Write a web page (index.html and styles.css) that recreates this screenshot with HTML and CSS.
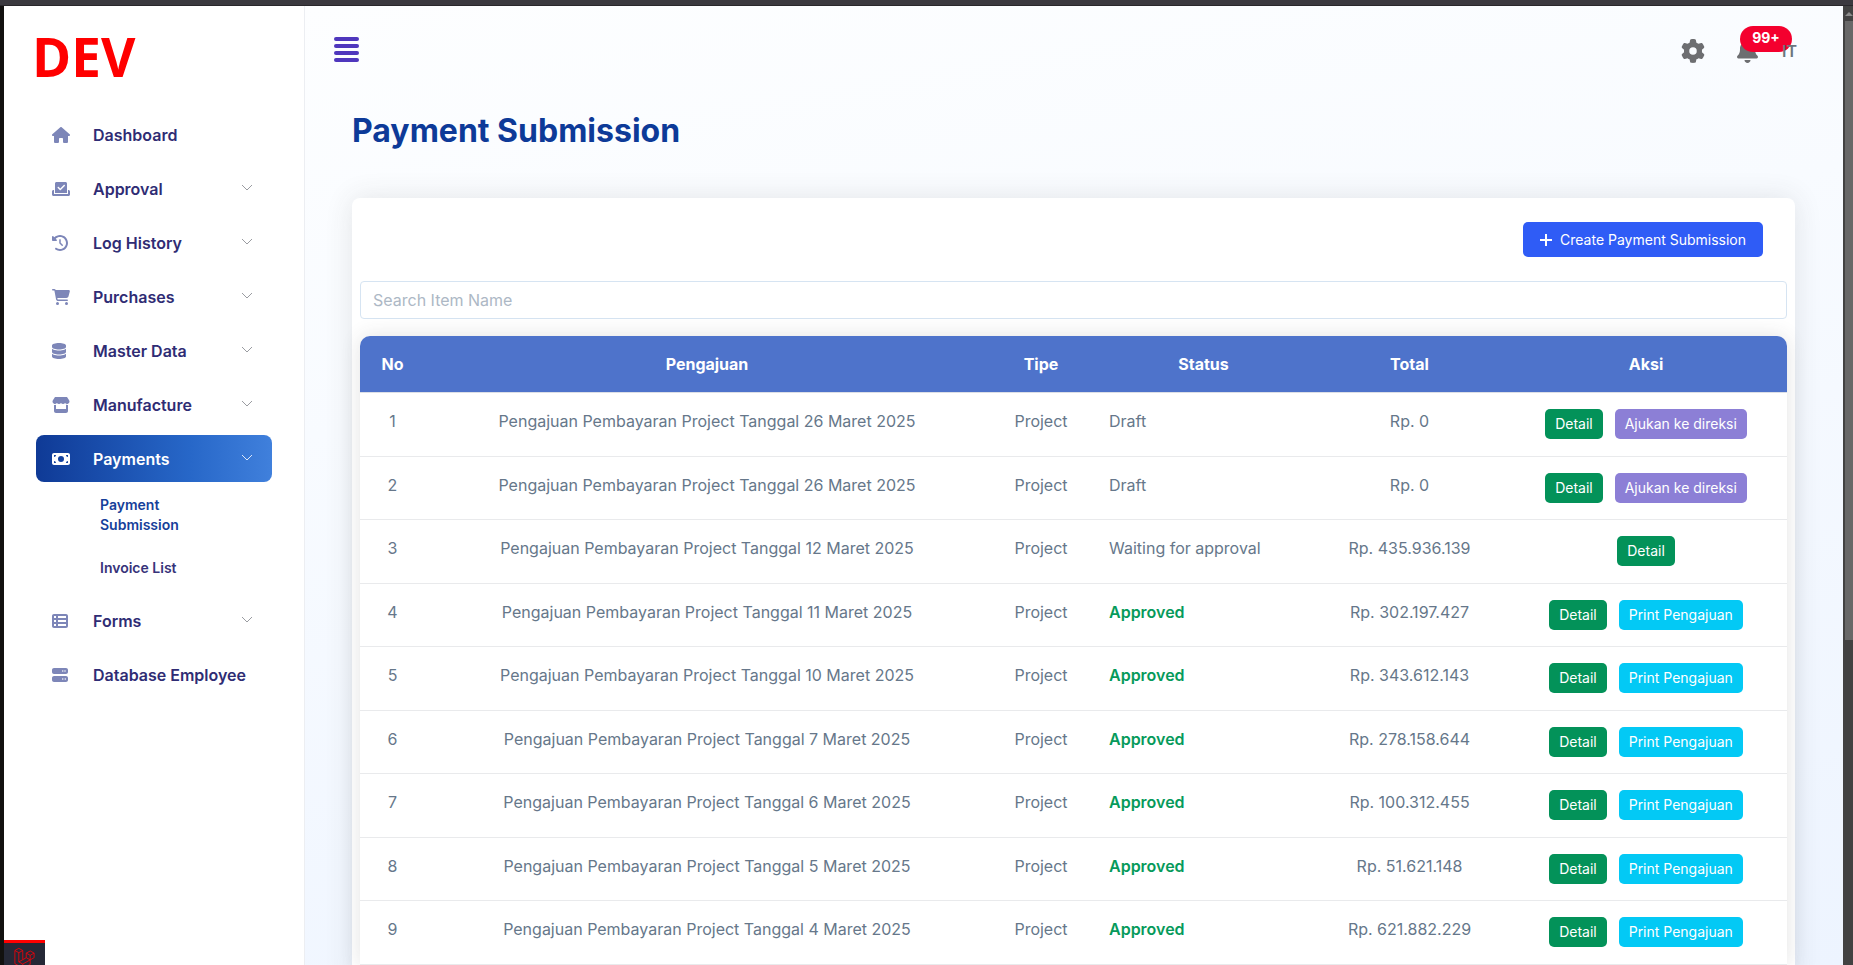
FILE: index.html
```html
<!DOCTYPE html>
<html lang="id">
<head>
<meta charset="utf-8">
<title>Payment Submission</title>
<link rel="stylesheet" href="styles.css">
</head>
<body>
<div class="frame-top"></div>
<div class="frame">
  <aside class="sidebar">
    <a class="brand" href="#">DEV</a>
    <nav class="nav">
      <a class="nav-item" href="#"><svg class="ico" viewBox="0 0 576 512"><path d="M575.8 255.5c0 18-15 32.1-32 32.1h-32l.7 160.2c0 2.7-.2 5.4-.5 8.100V472c0 22.100-17.900 40-40 40H456c-1.100 0-2.200 0-3.300-.1c-1.400 .1-2.800 .1-4.200 .1H416 392c-22.100 0-40-17.900-40-40V448 384c0-17.700-14.300-32-32-32H256c-17.700 0-32 14.300-32 32v64 24c0 22.100-17.900 40-40 40H160 128.100c-1.500 0-3-.1-4.500-.2c-1.200 .1-2.400 .2-3.600 .2H104c-22.100 0-40-17.900-40-40V360c0-.9 0-1.900 .1-2.800V287.600H32c-18 0-32-14-32-32.100c0-9 3-17 10-24L266.400 8c7-7 15-8 22-8s15 2 21 7L564.800 231.500c8 7 12 15 11 24z"/></svg><span>Dashboard</span></a>
      <a class="nav-item" href="#"><svg class="ico" viewBox="0 0 576 512"><path d="M96 80c0-26.500 21.500-48 48-48H432c26.500 0 48 21.500 48 48V384H96V80zm313 47c-9.400-9.400-24.600-9.400-33.900 0l-111 111-47-47c-9.400-9.400-24.600-9.400-33.900 0s-9.400 24.600 0 33.900l64 64c9.400 9.400 24.600 9.400 33.900 0L409 161c9.400-9.400 9.400-24.600 0-33.900zM0 336c0-26.500 21.500-48 48-48H64V416H512V288h16c26.500 0 48 21.500 48 48v96c0 26.500-21.500 48-48 48H48c-26.500 0-48-21.500-48-48V336z"/></svg><span>Approval</span><svg class="chev" viewBox="0 0 12 8"><path d="M1 1l5 5 5-5"/></svg></a>
      <a class="nav-item" href="#"><svg class="ico" viewBox="0 0 512 512"><path d="M75 75L41 41C25.900 25.900 0 36.600 0 57.900V168c0 13.300 10.700 24 24 24H134.100c21.400 0 32.100-25.900 17-41l-30.800-30.800C155 85.500 203 64 256 64c106 0 192 86 192 192s-86 192-192 192c-40.800 0-78.600-12.700-109.700-34.400c-14.500-10.100-34.400-6.600-44.600 7.900s-6.600 34.400 7.900 44.600C151.200 495 201.700 512 256 512c141.400 0 256-114.600 256-256S397.400 0 256 0C185.300 0 121.300 28.700 75 75zm181 53c-13.300 0-24 10.700-24 24V256c0 6.400 2.500 12.500 7 17l72 72c9.400 9.400 24.600 9.400 33.900 0s9.400-24.600 0-33.900l-65-65V152c0-13.300-10.700-24-24-24z"/></svg><span>Log History</span><svg class="chev" viewBox="0 0 12 8"><path d="M1 1l5 5 5-5"/></svg></a>
      <a class="nav-item" href="#"><svg class="ico" viewBox="0 0 576 512"><path d="M0 24C0 10.700 10.700 0 24 0H69.500c22 0 41.500 12.800 50.600 32h411c26.300 0 45.500 25 38.600 50.400l-41 152.300c-8.500 31.400-37 53.300-69.500 53.300H170.700l5.400 28.500c2.200 11.300 12.100 19.500 23.600 19.500H488c13.300 0 24 10.700 24 24s-10.700 24-24 24H199.700c-34.600 0-64.300-24.600-70.700-58.500L77.400 54.500c-.7-3.800-4-6.500-7.900-6.500H24C10.700 48 0 37.300 0 24zM128 464a48 48 0 1 1 96 0 48 48 0 1 1 -96 0zm336-48a48 48 0 1 1 0 96 48 48 0 1 1 0-96z"/></svg><span>Purchases</span><svg class="chev" viewBox="0 0 12 8"><path d="M1 1l5 5 5-5"/></svg></a>
      <a class="nav-item" href="#"><svg class="ico" viewBox="0 0 448 512"><path d="M448 80v48c0 44.200-100.300 80-224 80S0 172.200 0 128V80C0 35.800 100.300 0 224 0S448 35.800 448 80zM393.200 214.700c20.800-7.400 39.900-16.900 54.800-28.600V288c0 44.200-100.300 80-224 80S0 332.200 0 288V186.100c14.900 11.800 34 21.200 54.800 28.600C99.700 230.700 159.500 240 224 240s124.300-9.300 169.200-25.300zM0 346.100c14.900 11.800 34 21.200 54.800 28.600C99.700 390.700 159.500 400 224 400s124.300-9.300 169.200-25.300c20.800-7.400 39.900-16.900 54.800-28.600V432c0 44.200-100.300 80-224 80S0 476.200 0 432V346.100z"/></svg><span>Master Data</span><svg class="chev" viewBox="0 0 12 8"><path d="M1 1l5 5 5-5"/></svg></a>
      <a class="nav-item" href="#"><svg class="ico" viewBox="0 0 576 512"><path d="M547.600 103.800L490.300 13.100C485.200 5 476.100 0 466.400 0H109.600C99.900 0 90.800 5 85.700 13.100L28.300 103.800c-29.600 46.800-3.400 111.900 51.900 119.400c4 .5 8.100 .8 12.100 .8c26.100 0 49.300-11.400 65.200-29c15.900 17.600 39.100 29 65.200 29s49.300-11.400 65.200-29c15.900 17.600 39.100 29 65.200 29c26.200 0 49.300-11.400 65.200-29c16 17.600 39.100 29 65.200 29c4.100 0 8.100-.3 12.100-.8c55.500-7.400 81.800-72.500 52.100-119.400zM499.700 254.900c-5.300 .7-10.700 1.100-16.200 1.100c-12.400 0-24.300-1.900-35.400-5.300V384H128V250.600c-11.200 3.500-23.200 5.400-35.600 5.400c-5.500 0-11-.4-16.300-1.100c-4.100-.6-8.100-1.300-12.100-2.300V448c0 35.300 28.700 64 64 64H448c35.300 0 64-28.700 64-64V252.600c-4 1-8 1.800-12.300 2.300z"/></svg><span>Manufacture</span><svg class="chev" viewBox="0 0 12 8"><path d="M1 1l5 5 5-5"/></svg></a>
      <a class="nav-item active" href="#"><svg class="ico" viewBox="0 0 576 512"><path fill-rule="evenodd" d="M64 64C28.700 64 0 92.700 0 128V384c0 35.300 28.700 64 64 64H512c35.300 0 64-28.700 64-64V128c0-35.300-28.700-64-64-64H64zM128 384H64V320c35.300 0 64 28.700 64 64zM64 192V128h64c0 35.300-28.700 64-64 64zM448 384c0-35.300 28.700-64 64-64v64H448zM512 192c-35.300 0-64-28.700-64-64h64v64zM288 160a96 96 0 1 1 0 192 96 96 0 1 1 0-192z"/></svg><span>Payments</span><svg class="chev" viewBox="0 0 12 8"><path d="M1 1l5 5 5-5"/></svg></a>
      <div class="subnav">
        <a class="sub current" href="#">Payment Submission</a>
        <a class="sub" href="#">Invoice List</a>
      </div>
      <a class="nav-item" href="#"><svg class="ico" viewBox="0 0 512 512"><path fill-rule="evenodd" d="M0 96C0 60.700 28.700 32 64 32H448c35.300 0 64 28.700 64 64V416c0 35.300-28.700 64-64 64H64c-35.300 0-64-28.700-64-64V96zM64 96v64h64V96H64zm384 0H192v64H448V96zM64 224v64h64V224H64zm384 0H192v64H448V224zM64 352v64h64V352H64zm384 0H192v64H448V352z"/></svg><span>Forms</span><svg class="chev" viewBox="0 0 12 8"><path d="M1 1l5 5 5-5"/></svg></a>
      <a class="nav-item" href="#"><svg class="ico" viewBox="0 0 512 512"><path fill-rule="evenodd" d="M64 32C28.700 32 0 60.700 0 96v64c0 35.300 28.700 64 64 64H448c35.300 0 64-28.700 64-64V96c0-35.300-28.700-64-64-64H64zm280 72a24 24 0 1 1 0 48 24 24 0 1 1 0-48zm48 24a24 24 0 1 1 48 0 24 24 0 1 1 -48 0zM64 288c-35.300 0-64 28.700-64 64v64c0 35.300 28.700 64 64 64H448c35.300 0 64-28.700 64-64V352c0-35.300-28.700-64-64-64H64zm280 72a24 24 0 1 1 0 48 24 24 0 1 1 0-48zm56 24a24 24 0 1 1 48 0 24 24 0 1 1 -48 0z"/></svg><span>Database Employee</span></a>
    </nav>
    <button class="debug" type="button" aria-label="Debug bar"><svg viewBox="0 0 24 24"><path d="M1 4l4.500-2.500L10 4v10.500l4-2.300V7l4.500-2.500L23 7v5.200l-4.500 2.500V20L10 24l-9-5zM1 4l4.500 2.500L10 4M5.500 6.500V17l4.500 2.500 8.500-4.800M14 7l4.500 2.500L23 7M18.500 9.500v5.200M5.500 17l4.500-2.500M14 12.200l4.500 2.500M10 19.500V24"/></svg></button>
  </aside>
  <main class="main">
    <header class="topbar">
      <button class="menu" type="button" aria-label="Menu"><span></span><span></span><span></span><span></span></button>
      <div class="tools">
        <button class="tool" type="button" aria-label="Settings"><svg class="gear" viewBox="0 0 512 512"><path d="M495.900 166.600c3.200 8.700 .5 18.400-6.400 24.600l-43.300 39.400c1.100 8.300 1.700 16.800 1.700 25.400s-.6 17.100-1.700 25.400l43.300 39.400c6.900 6.200 9.600 15.900 6.400 24.600c-4.400 11.900-9.700 23.300-15.800 34.300l-4.700 8.100c-6.600 11-14 21.400-22.100 31.200c-5.900 7.200-15.700 9.600-24.500 6.800l-55.700-17.700c-13.400 10.300-28.200 18.900-44 25.400l-12.500 57.100c-2 9.100-9 16.300-18.200 17.800c-13.800 2.300-28 3.500-42.500 3.500s-28.700-1.200-42.500-3.500c-9.200-1.500-16.200-8.700-18.200-17.800l-12.500-57.100c-15.800-6.500-30.600-15.100-44-25.400L83.100 425.900c-8.800 2.800-18.600 .3-24.500-6.800c-8.100-9.800-15.500-20.200-22.100-31.200l-4.700-8.100c-6.100-11-11.400-22.400-15.800-34.300c-3.200-8.700-.5-18.400 6.400-24.600l43.300-39.400C64.600 273.100 64 264.600 64 256s.6-17.100 1.700-25.400L22.400 191.200c-6.900-6.200-9.600-15.900-6.400-24.600c4.400-11.900 9.700-23.300 15.800-34.300l4.700-8.100c6.600-11 14-21.400 22.100-31.200c5.900-7.200 15.700-9.600 24.500-6.800l55.700 17.700c13.400-10.300 28.200-18.900 44-25.400l12.500-57.100c2-9.100 9-16.300 18.200-17.800C227.300 1.200 241.500 0 256 0s28.700 1.200 42.500 3.500c9.200 1.500 16.200 8.700 18.200 17.800l12.500 57.100c15.800 6.500 30.600 15.100 44 25.400l55.700-17.700c8.800-2.800 18.600-.3 24.500 6.800c8.100 9.800 15.500 20.200 22.100 31.200l4.700 8.100c6.100 11 11.400 22.400 15.800 34.300zM256 336a80 80 0 1 0 0-160 80 80 0 1 0 0 160z"/></svg></button>
        <button class="tool bell" type="button" aria-label="Notifications"><svg viewBox="0 0 448 512"><path d="M224 0c-17.700 0-32 14.300-32 32V51.200C119 66 64 130.600 64 208v18.800c0 47-17.300 92.400-48.500 127.600l-7.400 8.300c-8.400 9.400-10.400 22.900-5.300 34.400S19.400 416 32 416H416c12.600 0 24-7.400 29.200-18.900s3.100-25-5.300-34.400l-7.400-8.300C401.300 319.200 384 273.900 384 226.800V208c0-77.400-55-142-128-156.800V32c0-17.700-14.300-32-32-32zm45.300 493.300c12-12 18.700-28.300 18.700-45.300H224 160c0 17 6.700 33.300 18.700 45.300s28.300 18.700 45.300 18.700s33.300-6.700 45.300-18.700z"/></svg><span class="badge">99+</span></button>
        <a class="user" href="#">IT</a>
      </div>
    </header>
    <div class="content">
      <h1 class="title">Payment Submission</h1>
      <section class="card">
        <div class="actions"><button class="create" type="button"><svg viewBox="0 0 12 12"><path d="M6 0v12M0 6h12"/></svg>Create Payment Submission</button></div>
        <input class="search" type="text" placeholder="Search Item Name" aria-label="Search Item Name">
        <table class="table">
          <colgroup><col class="c-no"><col><col class="c-type"><col class="c-status"><col class="c-total"><col class="c-action"></colgroup>
          <thead><tr><th>No</th><th>Pengajuan</th><th>Tipe</th><th>Status</th><th>Total</th><th>Aksi</th></tr></thead>
          <tbody>
            <tr><td>1</td><td>Pengajuan Pembayaran Project Tanggal 26 Maret 2025</td><td>Project</td><td class="status">Draft</td><td>Rp. 0</td><td><div class="btns"><button class="btn detail" type="button">Detail</button><button class="btn submit" type="button">Ajukan ke direksi</button></div></td></tr>
            <tr><td>2</td><td>Pengajuan Pembayaran Project Tanggal 26 Maret 2025</td><td>Project</td><td class="status">Draft</td><td>Rp. 0</td><td><div class="btns"><button class="btn detail" type="button">Detail</button><button class="btn submit" type="button">Ajukan ke direksi</button></div></td></tr>
            <tr><td>3</td><td>Pengajuan Pembayaran Project Tanggal 12 Maret 2025</td><td>Project</td><td class="status">Waiting for approval</td><td>Rp. 435.936.139</td><td><div class="btns"><button class="btn detail" type="button">Detail</button></div></td></tr>
            <tr><td>4</td><td>Pengajuan Pembayaran Project Tanggal 11 Maret 2025</td><td>Project</td><td class="status approved">Approved</td><td>Rp. 302.197.427</td><td><div class="btns"><button class="btn detail" type="button">Detail</button><button class="btn print" type="button">Print Pengajuan</button></div></td></tr>
            <tr><td>5</td><td>Pengajuan Pembayaran Project Tanggal 10 Maret 2025</td><td>Project</td><td class="status approved">Approved</td><td>Rp. 343.612.143</td><td><div class="btns"><button class="btn detail" type="button">Detail</button><button class="btn print" type="button">Print Pengajuan</button></div></td></tr>
            <tr><td>6</td><td>Pengajuan Pembayaran Project Tanggal 7 Maret 2025</td><td>Project</td><td class="status approved">Approved</td><td>Rp. 278.158.644</td><td><div class="btns"><button class="btn detail" type="button">Detail</button><button class="btn print" type="button">Print Pengajuan</button></div></td></tr>
            <tr><td>7</td><td>Pengajuan Pembayaran Project Tanggal 6 Maret 2025</td><td>Project</td><td class="status approved">Approved</td><td>Rp. 100.312.455</td><td><div class="btns"><button class="btn detail" type="button">Detail</button><button class="btn print" type="button">Print Pengajuan</button></div></td></tr>
            <tr><td>8</td><td>Pengajuan Pembayaran Project Tanggal 5 Maret 2025</td><td>Project</td><td class="status approved">Approved</td><td>Rp. 51.621.148</td><td><div class="btns"><button class="btn detail" type="button">Detail</button><button class="btn print" type="button">Print Pengajuan</button></div></td></tr>
            <tr><td>9</td><td>Pengajuan Pembayaran Project Tanggal 4 Maret 2025</td><td>Project</td><td class="status approved">Approved</td><td>Rp. 621.882.229</td><td><div class="btns"><button class="btn detail" type="button">Detail</button><button class="btn print" type="button">Print Pengajuan</button></div></td></tr>
          </tbody>
        </table>
      </section>
    </div>
  </main>
  <div class="scrollbar"><div class="scroll-arrow"></div><div class="thumb"></div></div>
</div>
</body>
</html>
```
FILE: styles.css
```css
* { box-sizing: border-box; }
body {
  margin: 0;
  height: 100vh;
  overflow: hidden;
  display: flex;
  flex-direction: column;
  font-family: Inter, "Liberation Sans", sans-serif;
  font-size: 16px;
  line-height: 24px;
  color: #66778a;
}
a { color: inherit; text-decoration: none; }
button { font-family: inherit; border: 0; padding: 0; cursor: pointer; }
.frame-top { flex: none; height: 6px; background: #3b393f; border-bottom: 1px solid #29272b; }
.frame { flex: 1; min-height: 0; display: flex; border-left: 4px solid #12110f; }

.sidebar {
  position: relative;
  flex: none;
  width: 301px;
  background: #fff;
  border-right: 1px solid #eceef2;
  padding: 23px 28px 0;
}
.brand {
  display: block;
  height: 64px;
  line-height: 56px;
  font-family: "Open Sans", sans-serif;
  font-weight: 700;
  font-size: 53px;
  color: #f00;
}
.nav { display: flex; flex-direction: column; gap: 7px; padding: 18px 4px 0; }
.nav-item {
  display: grid;
  grid-template-columns: 25px 1fr auto;
  align-items: center;
  column-gap: 16px;
  height: 47px;
  padding: 0 19px 0 16px;
  border-radius: 8px;
  font-weight: 600;
  white-space: nowrap;
  color: #2f2c74;
}
.ico { height: 16px; fill: #7d86b8; }
.chev { width: 12px; height: 8px; margin-bottom: 2px; fill: none; stroke: #9a9ca1; stroke-width: 1; }
.active { color: #fff; background: linear-gradient(90deg, #0f3a96, #2767c8 65%, #4080dc); }
.active .ico { fill: #fff; }
.active .chev { stroke: #dbe6f8; }
.subnav { display: flex; flex-direction: column; gap: 23px; width: 160px; padding: 6px 0 12px 64px; }
.sub { font-size: 14px; line-height: 20px; font-weight: 600; color: #37337a; }
.sub.current { color: #16409a; }
.debug {
  position: absolute;
  left: 0;
  bottom: 0;
  width: 41px;
  height: 25px;
  overflow: hidden;
  background: #252836;
  border-top: 3px solid #f00;
  display: flex;
  justify-content: center;
  padding-top: 4px;
}
.debug svg { flex: none; width: 21px; height: 21px; fill: none; stroke: #e8040c; stroke-width: 1; }

.main { flex: 1; min-width: 0; background: linear-gradient(170deg, #fdfeff, #f8fbff 35%, #edf4ff); }
.topbar { display: flex; justify-content: space-between; align-items: center; height: 90px; padding: 0 46px 0 29px; }
.menu { display: flex; flex-direction: column; gap: 3px; width: 25px; margin-bottom: 4px; background: none; }
.menu span { height: 4px; border-radius: 2px; background: #4f37bd; }
.tools { display: flex; align-items: center; color: #6d6e71; }
.tool { display: flex; background: none; }
.tool svg { height: 24px; fill: #6d6e71; }
.bell { position: relative; margin-left: 32px; }
.badge {
  position: absolute;
  left: 3px;
  top: -13px;
  width: 52px;
  height: 26px;
  border-radius: 13px;
  background: #f4002e;
  color: #fff;
  font-size: 14px;
  line-height: 24px;
  font-weight: 700;
}
.user { position: relative; margin-left: 24px; font-weight: 600; color: #6c757d; }
.content { padding: 0 48px 0 47px; }
.title { margin: 0; padding-top: 15px; height: 102px; font-size: 32px; line-height: 40px; font-weight: 700; color: #0d3a98; }
.card { background: #fff; border-radius: 8px; padding: 24px 8px; box-shadow: 0 0 28px rgba(60, 60, 60, 0.12); }
.actions { display: flex; justify-content: flex-end; padding: 0 24px 24px 0; }
.create {
  display: flex;
  align-items: center;
  gap: 8px;
  height: 35px;
  padding: 0 17px;
  border-radius: 5px;
  background: #2f5cf6;
  color: #fff;
  font-size: 14px;
}
.create svg { width: 12px; height: 12px; fill: none; stroke: #fff; stroke-width: 2; }
.search {
  display: block;
  width: 100%;
  height: 38px;
  padding: 0 12px;
  border: 1px solid #d6e4f2;
  border-radius: 4px;
  background: #fff;
  color: #66778a;
  font: inherit;
}
.search::placeholder { color: #adb8c5; opacity: 1; }
.table {
  width: 100%;
  margin-top: 17px;
  table-layout: fixed;
  border-collapse: separate;
  border-spacing: 0;
  border-radius: 10px 10px 0 0;
  background: #fff;
  box-shadow: 0 0 20px rgba(60, 60, 60, 0.14);
}
.c-no { width: 65px; }
.c-type { width: 104px; }
.c-status { width: 221px; }
.c-total { width: 191px; }
.c-action { width: 282px; }
.table th { height: 57px; padding: 0; background: #4e73cb; color: #fff; font-weight: 700; border-bottom: 1px solid #dcdfe6; }
.table th:first-child { border-top-left-radius: 10px; }
.table th:last-child { border-top-right-radius: 10px; }
.table td { height: 63px; padding: 16px 0 0; vertical-align: top; text-align: center; border-bottom: 1px solid #e9eaec; }
.table tr:nth-child(odd) td { height: 64px; }
.table .status { padding-left: 16px; text-align: left; }
.approved { color: #069a5b; font-weight: 600; }
.btns { display: flex; justify-content: center; gap: 12px; }
.btn { height: 30px; padding: 0 10px; border-radius: 5px; color: #fff; font-size: 14px; line-height: 30px; }
.detail { background: #039259; }
.submit { background: #8c7fd6; }
.print { background: #03c9f5; }

.scrollbar { flex: none; width: 10px; padding-left: 2px; background: #424242; }
.scroll-arrow { height: 15px; display: flex; align-items: center; justify-content: center; }
.scroll-arrow::before { content: ""; border: 4px solid transparent; border-top: 0; border-bottom-color: #8b8b8b; }
.thumb { height: 67%; max-height: 619px; background: #686868; }
```
